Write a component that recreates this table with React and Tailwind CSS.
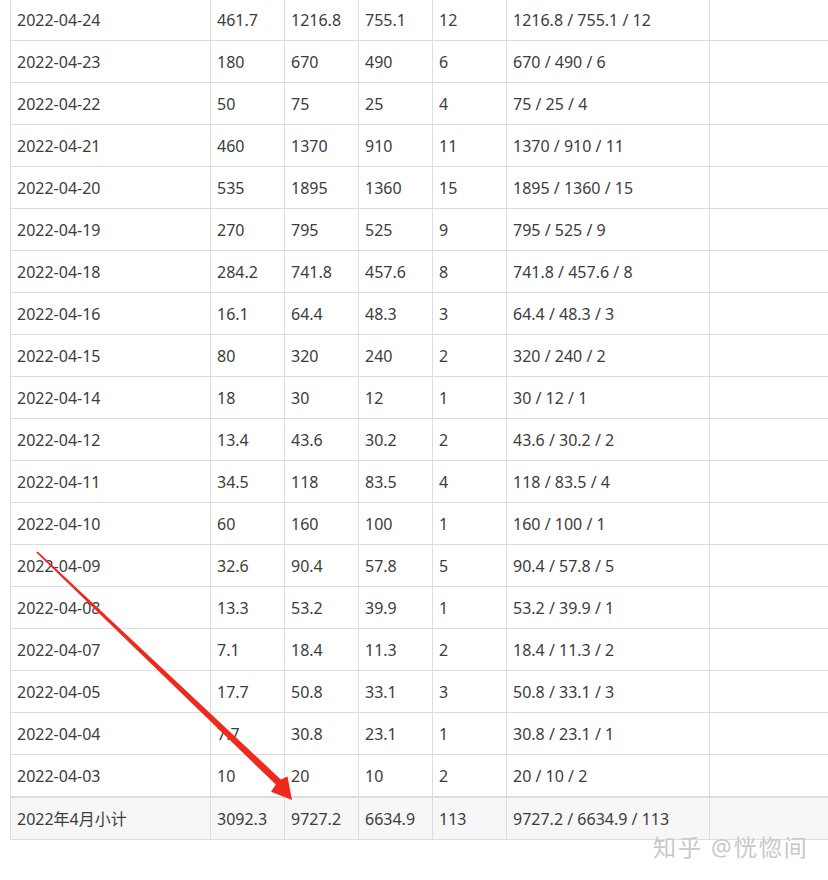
import React from "react";

const rows = [
  ["2022-04-24", "461.7", "1216.8", "755.1", "12"],
  ["2022-04-23", "180", "670", "490", "6"],
  ["2022-04-22", "50", "75", "25", "4"],
  ["2022-04-21", "460", "1370", "910", "11"],
  ["2022-04-20", "535", "1895", "1360", "15"],
  ["2022-04-19", "270", "795", "525", "9"],
  ["2022-04-18", "284.2", "741.8", "457.6", "8"],
  ["2022-04-16", "16.1", "64.4", "48.3", "3"],
  ["2022-04-15", "80", "320", "240", "2"],
  ["2022-04-14", "18", "30", "12", "1"],
  ["2022-04-12", "13.4", "43.6", "30.2", "2"],
  ["2022-04-11", "34.5", "118", "83.5", "4"],
  ["2022-04-10", "60", "160", "100", "1"],
  ["2022-04-09", "32.6", "90.4", "57.8", "5"],
  ["2022-04-08", "13.3", "53.2", "39.9", "1"],
  ["2022-04-07", "7.1", "18.4", "11.3", "2"],
  ["2022-04-05", "17.7", "50.8", "33.1", "3"],
  ["2022-04-04", "7.7", "30.8", "23.1", "1"],
  ["2022-04-03", "10", "20", "10", "2"],
];

const total = ["2022年4月小计", "3092.3", "9727.2", "6634.9", "113"];

function Row({ r, isTotal }) {
  const cell = "h-full border-l border-[#dddddd] px-[6px] flex items-center shrink-0";
  return (
    <div
      className={`flex ${
        isTotal
          ? "h-[44px] border-t-2 border-b bg-[#f7f7f7]"
          : "h-[42px] border-t"
      } border-[#dddddd]`}
    >
      <div className={`${cell} w-[200px]`}>{r[0]}</div>
      <div className={`${cell} w-[74px]`}>{r[1]}</div>
      <div className={`${cell} w-[74px]`}>{r[2]}</div>
      <div className={`${cell} w-[74px]`}>{r[3]}</div>
      <div className={`${cell} w-[74px]`}>{r[4]}</div>
      <div className={`${cell} w-[203px]`}>
        {r[2]} / {r[3]} / {r[4]}
      </div>
      <div className={`${cell} w-[200px]`}></div>
    </div>
  );
}

export default function App() {
  return (
    <div
      className="relative w-[828px] h-[880px] overflow-hidden bg-white text-[16px] text-[#3c3c3c]"
      style={{ fontFamily: '"Noto Sans", "Noto Sans CJK SC", sans-serif' }}
    >
      {/* table */}
      <div className="ml-[10px] -mt-[2px] w-[900px]">
        {rows.map((r) => (
          <Row key={r[0]} r={r} />
        ))}
        <Row r={total} isTotal />
      </div>

      {/* red arrow */}
      <svg
        className="absolute left-0 top-0 pointer-events-none"
        width="828"
        height="880"
        viewBox="0 0 828 880"
      >
        <polygon
          points="37.7,551.5 280.8,779.4 287.5,776.5 292,800 271,791.8 275.8,784.6 36.3,552.5"
          fill="#ee2a1e"
        />
      </svg>

      {/* watermark */}
      <div
        className="absolute left-[653px] top-[830px] text-[23px] tracking-[2px] text-[#c8c8c8] whitespace-nowrap"
        style={{ textShadow: "0 0 1px #ffffff" }}
      >
        知乎 @恍惚间
      </div>
    </div>
  );
}
